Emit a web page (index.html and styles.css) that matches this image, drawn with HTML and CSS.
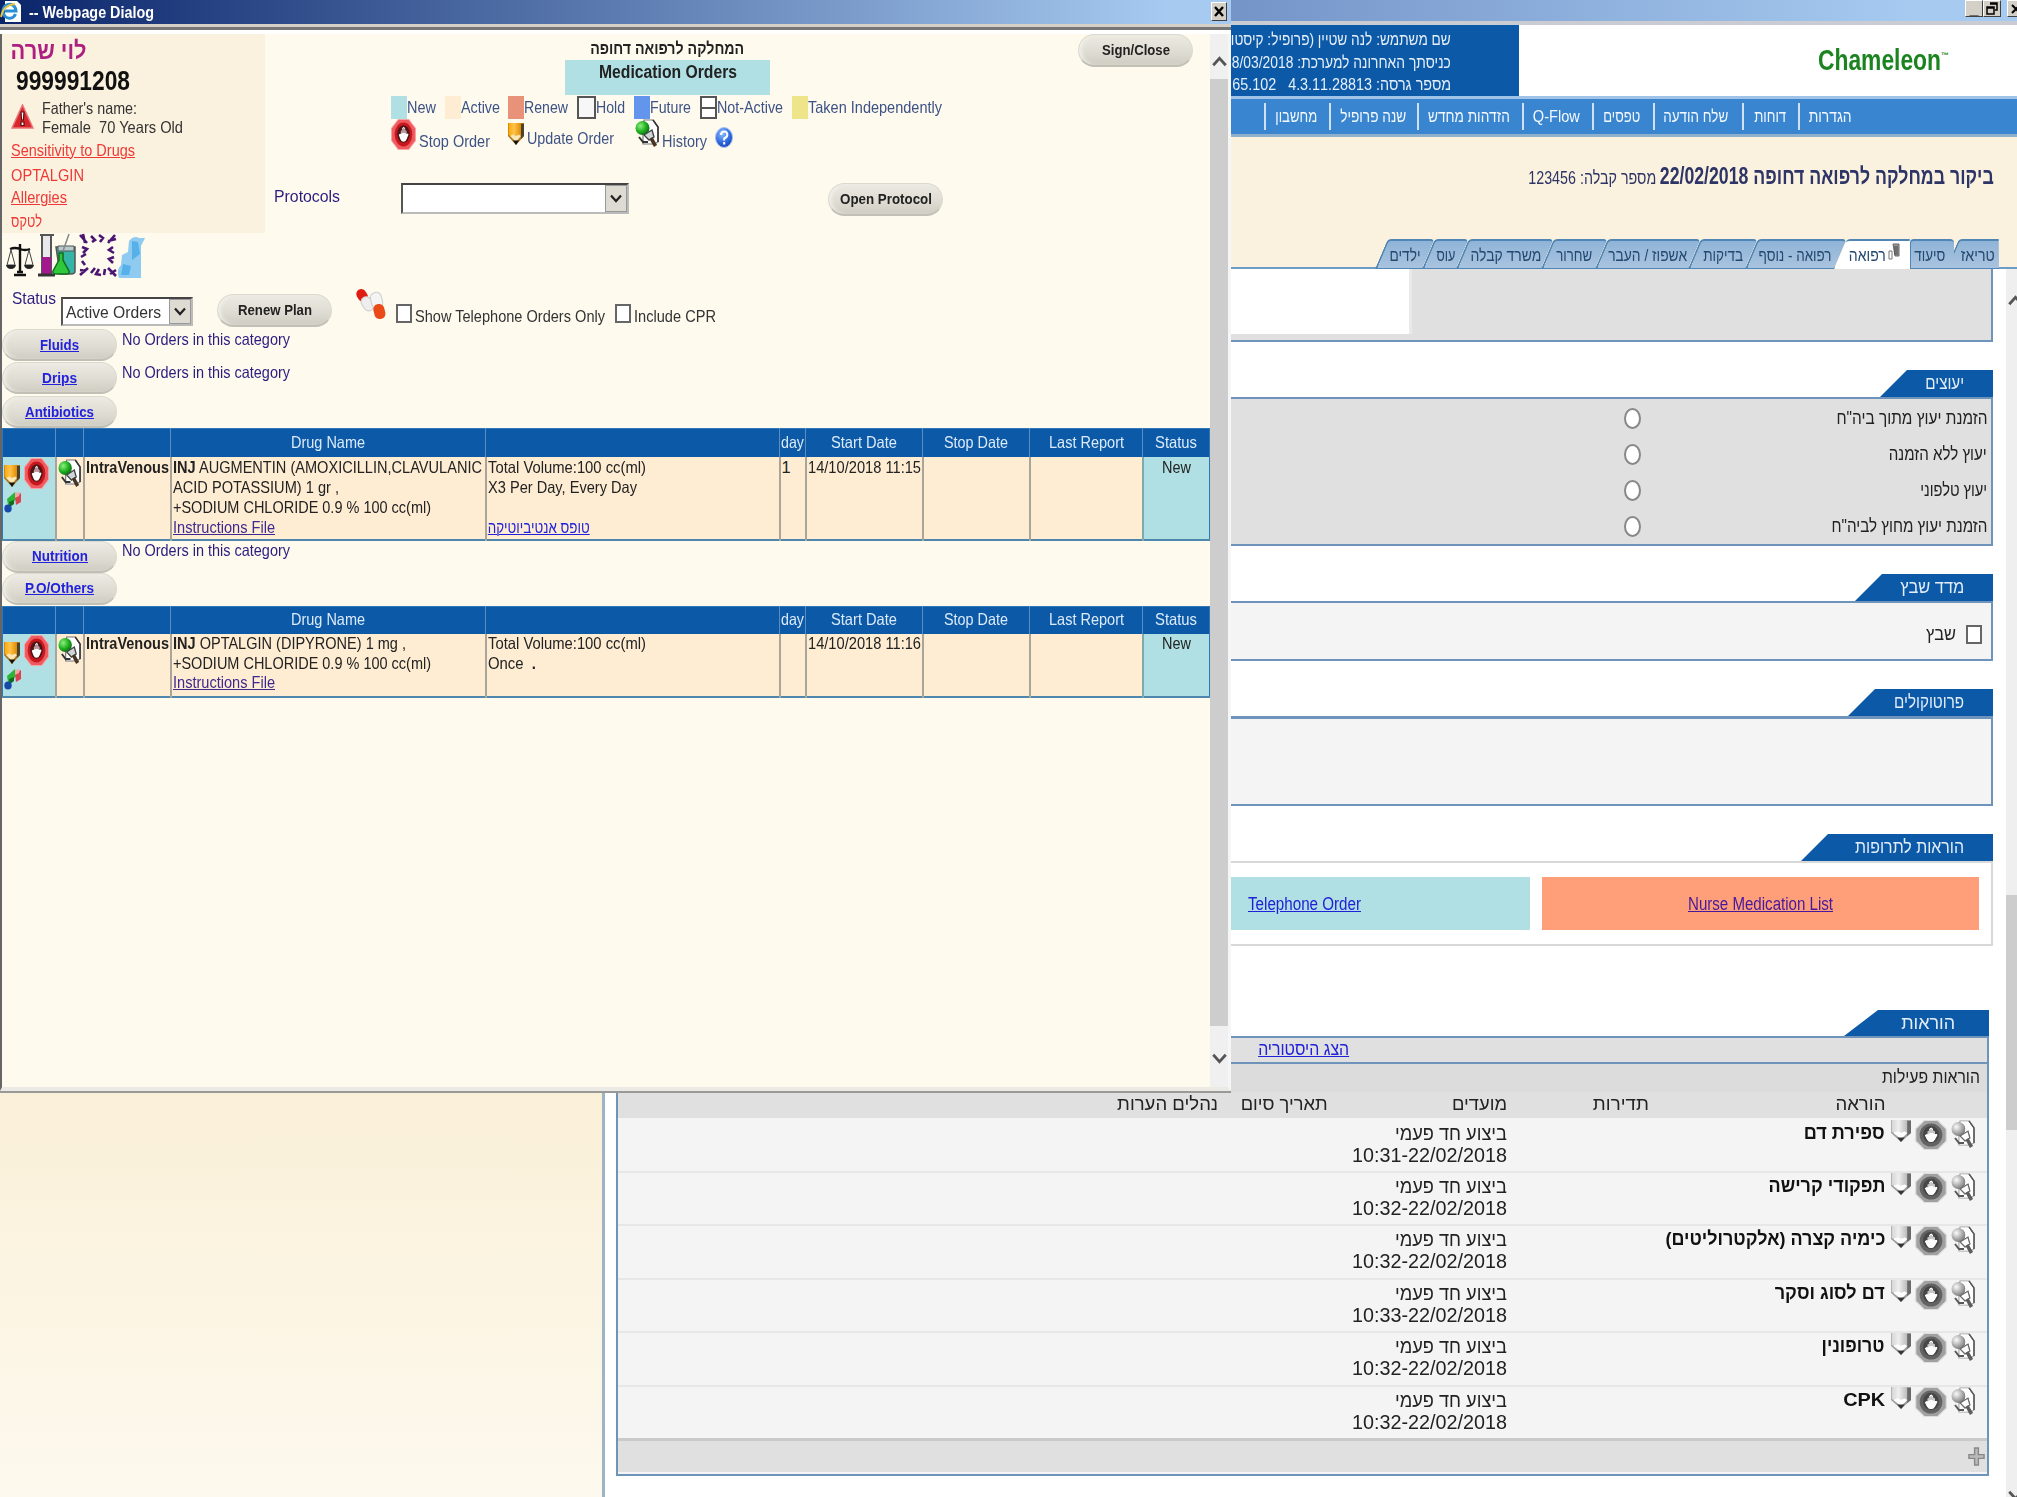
FILE: index.html
```html
<!DOCTYPE html>
<html lang="he">
<head>
<meta charset="utf-8">
<title>Chameleon</title>
<link rel="stylesheet" href="styles.css">
</head>
<body>
<svg class="defs" width="0" height="0">
  <defs>
    <linearGradient id="gold" x1="0" x2="1"><stop offset="0" stop-color="#f9a80c"/><stop offset=".45" stop-color="#ffc24a"/><stop offset="1" stop-color="#e08a00"/></linearGradient>
    <radialGradient id="ball" cx=".35" cy=".35" r=".7"><stop offset="0" stop-color="#8df07e"/><stop offset=".6" stop-color="#1fae1f"/><stop offset="1" stop-color="#0a6d12"/></radialGradient>
    <radialGradient id="blueball" cx=".4" cy=".3" r=".8"><stop offset="0" stop-color="#8fc0ff"/><stop offset=".6" stop-color="#2c66e0"/><stop offset="1" stop-color="#1b3fa8"/></radialGradient>
  </defs>
  <symbol id="stop" viewBox="0 0 24 30" preserveAspectRatio="none">
    <path d="M7 .5h10l6.500 8.500v12l-6.500 8.500H7L.5 21V9z" fill="#ee5a5f" stroke="#f6a3a3"/>
    <ellipse cx="12" cy="15" rx="8.500" ry="11.500" fill="#c9161d"/>
    <ellipse cx="12" cy="14.500" rx="6" ry="8.500" fill="#4d1517"/>
    <path d="M7.500 15.500q1-2 2-1v-3l1.200-.7V9l1.500-1.500L13.500 9v1.500l1.300 1v3q1.500-1 2 .5l-1.800 4.500q-1 2.500-3 2.500t-3-2.500z" fill="#fff"/>
    <path d="M9.700 14v-3l2.500-2.500L14.600 11v3l-2.400-.8z" fill="#8b5558" opacity=".6"/>
  </symbol>
  <symbol id="pencil" viewBox="0 0 16 22" preserveAspectRatio="none">
    <path d="M0 0h16v13l-8 9-8-9z" fill="#a8731a"/>
    <path d="M.5 0h12.500V12L8 16l-7.500-4z" fill="url(#gold)"/>
    <path d="M13 1h3v12l-3 3z" fill="#4b4332"/>
    <path d="M2 13l3-1.500 3 1.500 3-1.500 2 1.500-5 6z" fill="#fbe6b5"/><path d="M5 17.500L8 22l3-4.500z" fill="#111"/>
  </symbol>
  <symbol id="history" viewBox="0 0 24 28" preserveAspectRatio="none">
    <path d="M9 1h9l5 7v15l-4 2H8V10z" fill="#fff" stroke="#777" stroke-width="1.200"/>
    <path d="M18 1l5 7v15" fill="none" stroke="#333" stroke-width="1.600"/>
    <circle cx="7.500" cy="9" r="7" fill="url(#ball)"/>
    <path d="M9 16l8-5 2 7-5 3z" fill="#cfd6d8" stroke="#444" stroke-width="1.400"/>
    <path d="M16 19l4.500 8" stroke="#4a3524" stroke-width="3.600"/><path d="M4 18l4 5h5" fill="none" stroke="#333" stroke-width="2"/>
  </symbol>
  <symbol id="flow" viewBox="0 0 18 22" preserveAspectRatio="none">
    <path d="M4 18l3-8 6-4" fill="none" stroke="#333" stroke-width="2"/>
    <path d="M3 8l8-7 1 7-4 5-4 1z" fill="#29b637"/><path d="M11 6l6-4v9l-5 3z" fill="#d9434d"/><path d="M11 2l5-1-1 4-4 2z" fill="#f2a6a8"/><path d="M5 11l5-2v4l-4 3z" fill="#14691f"/>
    <ellipse cx="4" cy="17.500" rx="3.700" ry="4" fill="#1749a8"/>
  </symbol>
  <symbol id="chev-d" viewBox="0 0 12 8"><path d="M1 1l5 5.500L11 1" fill="none" stroke="currentColor" stroke-width="2.200"/></symbol>
</svg>

<div class="app" dir="rtl">
  <div class="app-title" dir="ltr">
    <i class="winbtn">_</i><i class="winbtn"><svg width="12" height="13" viewBox="0 0 12 13"><path d="M4 1h7v7H9M1 5h7v7H1zM1 6h7M4 2h7" fill="none" stroke="#000" stroke-width="1.500"/></svg></i><i class="winbtn last"><svg width="10" height="10" viewBox="0 0 10 10"><path d="M1 1l8 8M9 1L1 9" stroke="#000" stroke-width="2"/></svg></i>
  </div>
  <header class="brand">
    <div class="logo" dir="ltr"><span data-w="123">Chameleon</span><sup>™</sup></div>
    <div class="user">
      <div><span data-w="220">שם משתמש: לנה שטיין (פרופיל: קיסטו</span></div>
      <div><span data-w="219">כניסתך האחרונה למערכת: 8/03/2018</span></div>
      <div><span data-w="219">מספר גרסה: 4.3.11.28813 &nbsp; 65.102</span></div>
    </div>
  </header>
  <nav class="menu">
    <a class="m1"><span data-w="43">הגדרות</span></a>
    <a class="m2"><span data-w="32">דוחות</span></a>
    <a class="m3"><span data-w="65">שלח הודעה</span></a>
    <a class="m4"><span data-w="37">טפסים</span></a>
    <a class="m5"><span data-w="47">Q-Flow</span></a>
    <a class="m6"><span data-w="82">הזדהות מחדש</span></a>
    <a class="m7"><span data-w="66">שנה פרופיל</span></a>
    <a class="m8"><span data-w="42">מחשבון</span></a>
  </nav>
  <div class="visit">
    <h1><b data-w="334">ביקור במחלקה לרפואה דחופה 22/02/2018</b><span data-w="128">מספר קבלה: 123456</span></h1>
    <div class="tabs">
      <a class="t1"><span data-w="34">טריאז</span></a>
      <a class="t2"><span data-w="31">סיעוד</span></a>
      <a class="t3 on"><svg width="12" height="18" viewBox="0 0 12 18"><path d="M5 1h6v12H7z" fill="#999" stroke="#666"/><path d="M1 8h3v8H1z" fill="#fff" stroke="#777"/><path d="M7 3v9M9 3v9" stroke="#444"/></svg><span data-w="37">רפואה</span></a>
      <a class="t4"><span data-w="73">רפואה - נוסף</span></a>
      <a class="t5"><span data-w="40">בדיקות</span></a>
      <a class="t6"><span data-w="79">אשפוז / העבר</span></a>
      <a class="t7"><span data-w="36">שחרור</span></a>
      <a class="t8"><span data-w="71">משרד קבלה</span></a>
      <a class="t9"><span data-w="19">עוס</span></a>
      <a class="t10"><span data-w="31">ילדים</span></a>
    </div>
  </div>
  <div class="work">
    <div class="scroll"><svg class="up" width="15" height="11"><use href="#chev-d"/></svg><i></i><svg class="down" width="15" height="11"><use href="#chev-d"/></svg></div>
    <main>
      <section class="box first"><div class="whitebox"></div></section>

      <section class="consult">
        <h2 class="w112"><span data-w="39">יעוצים</span></h2>
        <div class="box grey">
          <label><span data-w="151">הזמנת יעוץ מתוך ביה"ח</span><i></i></label>
          <label><span data-w="98">יעוץ ללא הזמנה</span><i></i></label>
          <label><span data-w="67">יעוץ טלפוני</span><i></i></label>
          <label><span data-w="156">הזמנת יעוץ מחוץ לביה"ח</span><i></i></label>
        </div>
      </section>

      <section class="stroke">
        <h2 class="w137"><span data-w="64">מדד שבץ</span></h2>
        <div class="box"><i class="check"></i><span data-w="30">שבץ</span></div>
      </section>

      <section class="protocols">
        <h2 class="w144"><span data-w="70">פרוטוקולים</span></h2>
        <div class="box"></div>
      </section>

      <section class="meds">
        <h2 class="w191"><span data-w="109">הוראות לתרופות</span></h2>
        <div class="box" dir="ltr"><a class="tel"><span data-w="113">Telephone Order</span></a><a class="nurse"><span data-w="145">Nurse Medication List</span></a></div>
      </section>

      <section class="orders">
        <h2 class="w144"><span data-w="54">הוראות</span></h2>
        <div class="box">
          <div class="hist"><u data-w="91">הצג היסטוריה</u></div>
          <div class="active"><span data-w="98">הוראות פעילות</span></div>
          <div class="row head"><b></b><span><span data-w="50">הוראה</span></span><span><span data-w="56">תדירות</span></span><span><span data-w="55">מועדים</span></span><span><span data-w="87">תאריך סיום</span></span><span><span data-w="101">נהלים הערות</span></span></div>
          <div class="row"><b class="ic"><svg class="h"><use href="#history"/></svg><svg class="s"><use href="#stop"/></svg><svg class="p"><use href="#pencil"/></svg></b><strong><span data-w="81">ספירת דם</span></strong><span></span><div><span data-w="112">ביצוע חד פעמי</span><br><span dir="ltr" data-w="155">10:31-22/02/2018</span></div></div>
          <div class="row"><b class="ic"><svg class="h"><use href="#history"/></svg><svg class="s"><use href="#stop"/></svg><svg class="p"><use href="#pencil"/></svg></b><strong><span data-w="117">תפקודי קרישה</span></strong><span></span><div><span data-w="112">ביצוע חד פעמי</span><br><span dir="ltr" data-w="155">10:32-22/02/2018</span></div></div>
          <div class="row"><b class="ic"><svg class="h"><use href="#history"/></svg><svg class="s"><use href="#stop"/></svg><svg class="p"><use href="#pencil"/></svg></b><strong><span data-w="220">כימיה קצרה (אלקטרוליטים)</span></strong><span></span><div><span data-w="112">ביצוע חד פעמי</span><br><span dir="ltr" data-w="155">10:32-22/02/2018</span></div></div>
          <div class="row"><b class="ic"><svg class="h"><use href="#history"/></svg><svg class="s"><use href="#stop"/></svg><svg class="p"><use href="#pencil"/></svg></b><strong><span data-w="110">דם לסוג וסקר</span></strong><span></span><div><span data-w="112">ביצוע חד פעמי</span><br><span dir="ltr" data-w="155">10:33-22/02/2018</span></div></div>
          <div class="row"><b class="ic"><svg class="h"><use href="#history"/></svg><svg class="s"><use href="#stop"/></svg><svg class="p"><use href="#pencil"/></svg></b><strong><span data-w="63">טרופונין</span></strong><span></span><div><span data-w="112">ביצוע חד פעמי</span><br><span dir="ltr" data-w="155">10:32-22/02/2018</span></div></div>
          <div class="row"><b class="ic"><svg class="h"><use href="#history"/></svg><svg class="s"><use href="#stop"/></svg><svg class="p"><use href="#pencil"/></svg></b><strong><span data-w="42">CPK</span></strong><span></span><div><span data-w="112">ביצוע חד פעמי</span><br><span dir="ltr" data-w="155">10:32-22/02/2018</span></div></div>
          <div class="foot"><svg width="17" height="19" viewBox="0 0 18 20"><path d="M7 1h4v7h6v4h-6v7H7v-7H1V8h6z" fill="#bbb" stroke="#888" stroke-width="1.500"/></svg></div>
        </div>
      </section>
    </main>
    <aside></aside>
  </div>
</div>

<div class="dialog">
  <div class="dlg-title">
    <svg width="22" height="24" viewBox="0 0 22 24"><path d="M5 1h12l4 4v17H5z" fill="#fff"/><path d="M15.500 14a6.500 7 0 1 1 .5-3H5" fill="none" stroke="#2c8fd6" stroke-width="3"/><path d="M1 17Q3 5 15 4" fill="none" stroke="#e9c63e" stroke-width="1.800"/></svg>
    <span data-w="125">-- Webpage Dialog</span>
    <i class="winbtn"><svg width="10" height="11" viewBox="0 0 10 11"><path d="M1 1l8 9M9 1L1 10" stroke="#000" stroke-width="2.400"/></svg></i>
  </div>
  <div class="dlg-main">
    <div class="dlg-body">
      <div class="top">
        <div class="patient">
          <div class="pname"><span dir="rtl" data-w="76">לוי שרה</span></div>
          <div class="pid"><span data-w="114">999991208</span></div>
          <div class="pinfo">
            <svg width="23" height="26" viewBox="0 0 23 26"><path d="M11.500 1L22 24H1z" fill="#d8262c" stroke="#e8777a" stroke-width="1.500"/><path d="M10 8h3l-.6 8h-1.800zM10 18h3v3.500h-3z" fill="#fff" stroke="#5c0d10" stroke-width="1.200"/></svg>
            <div><div><span data-w="95">Father's name:</span></div><div><span data-w="141">Female &nbsp;70 Years Old</span></div></div>
          </div>
          <div class="al l1"><u data-w="124">Sensitivity to Drugs</u></div>
          <div class="al l2"><span data-w="73">OPTALGIN</span></div>
          <div class="al l3"><u data-w="56">Allergies</u></div>
          <div class="al l4"><span dir="rtl" data-w="31">לטקס</span></div>
        </div>
        <div class="tools">
          <div class="heading">
            <div class="unit"><div><span dir="rtl" data-w="154">המחלקה לרפואה דחופה</span></div><div class="mo"><span data-w="138">Medication Orders</span></div></div>
            <button class="pill"><span data-w="68">Sign/Close</span></button>
          </div>
          <div class="legend">
            <div><i class="new"></i><span data-w="29">New</span></div>
            <div><i class="act"></i><span data-w="39">Active</span></div>
            <div><i class="ren"></i><span data-w="44">Renew</span></div>
            <div><i class="hold"></i><span data-w="29">Hold</span></div>
            <div><i class="fut"></i><span data-w="41">Future</span></div>
            <div><i class="hold not"></i><span data-w="66">Not-Active</span></div>
            <div><i class="tak"></i><span data-w="134">Taken Independently</span></div>
          </div>
          <div class="legend two">
            <div><svg width="25" height="31"><use href="#stop"/></svg><span data-w="71">Stop Order</span></div>
            <div class="upd"><svg width="16" height="22"><use href="#pencil"/></svg><span data-w="87">Update Order</span></div>
            <div><svg width="24" height="28"><use href="#history"/></svg><span data-w="45">History</span></div>
            <div class="hlp"><svg width="18" height="21" viewBox="0 0 18 21"><ellipse cx="9" cy="10.500" rx="8.500" ry="10" fill="url(#blueball)" stroke="#a9c4ee"/><path d="M6 8q0-3.500 3.200-3.500T12.300 8q0 2-3.100 3.500v2M9.200 15v2.400" fill="none" stroke="#fff" stroke-width="2"/></svg></div>
          </div>
          <div class="proto"><span data-w="66">Protocols</span><div class="select"><span></span><b><svg width="12" height="9"><use href="#chev-d"/></svg></b></div><button class="pill"><span data-w="92">Open Protocol</span></button></div>
        </div>
      </div>
      <div class="picts">
        <svg width="28" height="36" viewBox="0 0 28 36"><path d="M14 2v29M4 7q5-2 10 0t10 0M8 33h12M11 30h6" fill="none" stroke="#111" stroke-width="2.400"/><path d="M5 8L1 23h8zM23 8l-4 15h8z" fill="none" stroke="#444"/><path d="M0 23h10q-1 4-5 4t-5-4M18 23h10q-1 4-5 4t-5-4" fill="#222"/></svg>
        <svg width="38" height="44" viewBox="0 0 38 44"><path d="M2 2h14M4 3v38h9V3" fill="#e8e8ea" stroke="#555" stroke-width="2"/><path d="M4 24h9v17H4z" fill="#a3178f"/><path d="M0 42h17" stroke="#333" stroke-width="3"/><path d="M18 14h19v24q0 3-4 3H22z" fill="#35b5a8" stroke="#555" stroke-width="1.500"/><path d="M20 13h16v5H20z" fill="#b5cccc" stroke="#555"/><path d="M31 1l-6 17" stroke="#888" stroke-width="1.500"/><path d="M21 20h4v7l6 11q1 3-3 3H18q-4 0-3-3l6-11z" fill="#2fc83a" stroke="#136b20" stroke-width="1.500"/></svg>
        <svg width="38" height="44" viewBox="0 0 38 44"><g fill="none" stroke="#4a1672" stroke-width="2.600"><path d="M1 2l7 8M4 1l2 9M12 3l4 4-3 2M20 2l4 3-3 4M36 2l-7 8M37 6l-8 2M3 14l5 2-4 4M2 24l5-3M3 28l3 4M34 14l-4 3 5 3M35 24l-5 2 4 4M1 42l8-7M1 37l6 1M12 40l4-5M20 36l-3 5 5 1M26 36l-1 6M37 43l-8-8M31 41l6-4"/></g></svg>
        <svg width="27" height="42" viewBox="0 0 27 42"><path d="M11 5q5-6 10-3l6 0-4 8v32H1q-3-8 2-13l1-10 6-3z" fill="#8fcbf0"/><path d="M14 5l6 1 2 12-8 6zM5 28l8 2-2 9H3z" fill="#56b0ea"/></svg>
      </div>
      <div class="status">
        <span class="lbl" data-w="44">Status</span>
        <div class="select"><span data-w="95">Active Orders</span><b><svg width="12" height="9"><use href="#chev-d"/></svg></b></div>
        <button class="pill"><span data-w="74">Renew Plan</span></button>
        <svg class="pills" width="31" height="33" viewBox="0 0 31 33"><g transform="rotate(-32 9 12)"><rect x="4" y="0" width="10" height="13" rx="5" fill="#e01b12"/><rect x="4" y="9" width="10" height="15" rx="5" fill="#eee" stroke="#ccc"/></g><g transform="rotate(-14 23 20)"><rect x="17" y="4" width="11" height="16" rx="5" fill="#f4f4f4" stroke="#ccc"/><rect x="17" y="16" width="11" height="15" rx="5" fill="#ea4a17"/></g></svg>
        <i class="check"></i><span class="ck" data-w="190">Show Telephone Orders Only</span>
        <i class="check second"></i><span class="ck" data-w="82">Include CPR</span>
      </div>
      <div class="cat"><a class="pill"><span data-w="39">Fluids</span></a><span data-w="168">No Orders in this category</span></div>
      <div class="cat"><a class="pill"><span data-w="35">Drips</span></a><span data-w="168">No Orders in this category</span></div>
      <div class="cat anti"><a class="pill"><span data-w="69">Antibiotics</span></a></div>
      <table>
        <colgroup><col class="c1"><col class="c2"><col class="c3"><col class="c4"><col class="c5"><col class="c6"><col class="c7"><col class="c8"><col class="c9"><col class="c10"></colgroup>
        <tr><th></th><th></th><th></th><th><span data-w="74">Drug Name</span></th><th></th><th><span data-w="23">day</span></th><th><span data-w="66">Start Date</span></th><th><span data-w="64">Stop Date</span></th><th><span data-w="75">Last Report</span></th><th><span data-w="42">Status</span></th></tr>
        <tr class="r1"><td class="teal"><div class="acts"><svg width="16" height="22"><use href="#pencil"/></svg><svg width="25" height="31"><use href="#stop"/></svg><svg width="18" height="22"><use href="#flow"/></svg></div></td><td><svg width="23" height="28"><use href="#history"/></svg></td><td><b data-w="83">IntraVenous</b></td>
          <td><span data-w="309"><b>INJ</b> AUGMENTIN (AMOXICILLIN,CLAVULANIC</span><br><span data-w="166">ACID POTASSIUM) 1 gr ,</span><br><span data-w="258">+SODIUM CHLORIDE 0.9 % 100 cc(ml)</span><br><u class="visited" data-w="102">Instructions File</u></td>
          <td><span data-w="158">Total Volume:100 cc(ml)</span><br><span data-w="149">X3 Per Day, Every Day</span><br><br><u dir="rtl" data-w="102">טופס אנטיביוטיקה</u></td><td>1</td><td><span data-w="113">14/10/2018 11:15</span></td><td></td><td></td><td class="teal new"><span data-w="29">New</span></td></tr>
      </table>
      <div class="cat nut"><a class="pill"><span data-w="56">Nutrition</span></a><span data-w="168">No Orders in this category</span></div>
      <div class="cat po"><a class="pill"><span data-w="69">P.O/Others</span></a></div>
      <table>
        <colgroup><col class="c1"><col class="c2"><col class="c3"><col class="c4"><col class="c5"><col class="c6"><col class="c7"><col class="c8"><col class="c9"><col class="c10"></colgroup>
        <tr><th></th><th></th><th></th><th><span data-w="74">Drug Name</span></th><th></th><th><span data-w="23">day</span></th><th><span data-w="66">Start Date</span></th><th><span data-w="64">Stop Date</span></th><th><span data-w="75">Last Report</span></th><th><span data-w="42">Status</span></th></tr>
        <tr class="r2"><td class="teal"><div class="acts"><svg width="16" height="22"><use href="#pencil"/></svg><svg width="25" height="31"><use href="#stop"/></svg><svg width="18" height="22"><use href="#flow"/></svg></div></td><td><svg width="23" height="28"><use href="#history"/></svg></td><td><b data-w="83">IntraVenous</b></td>
          <td><span data-w="233"><b>INJ</b> OPTALGIN (DIPYRONE) 1 mg ,</span><br><span data-w="258">+SODIUM CHLORIDE 0.9 % 100 cc(ml)</span><br><u class="visited" data-w="102">Instructions File</u></td>
          <td><span data-w="158">Total Volume:100 cc(ml)</span><br><span data-w="48">Once &nbsp;<b>.</b></span></td><td></td><td><span data-w="113">14/10/2018 11:16</span></td><td></td><td></td><td class="teal new"><span data-w="29">New</span></td></tr>
      </table>
    </div>
    <div class="dlg-scroll"><svg class="up" width="15" height="11"><use href="#chev-d"/></svg><i></i><svg width="15" height="11"><use href="#chev-d"/></svg></div>
  </div>
</div>
<script src="fit.js"></script>
</body>
</html>
```

FILE: fit.js
```js
// Condense each label horizontally to the width given in data-w.
document.querySelectorAll('[data-w]').forEach(function (el) {
  var target = Number(el.dataset.w);
  var natural = el.getBoundingClientRect().width;
  el.style.transform = 'scaleX(' + target / natural + ')';
  el.style.marginInlineEnd = (target - natural) + 'px';
});
```

FILE: styles.css
```css
* { box-sizing: border-box; }
body { margin: 0; width: 2017px; height: 1497px; overflow: hidden; position: relative; background: #fff; font: 16.5px/20px "Liberation Sans", Arial, sans-serif; color: #222; }
.defs { position: absolute; }
svg { display: block; flex: none; }
i { font-style: normal; flex: none; }
[data-w] { display: inline-block; white-space: nowrap; flex: none; transform-origin: 0 50%; text-decoration-thickness: 1px; }
[dir="rtl"] [data-w], [data-w][dir="rtl"] { transform-origin: 100% 50%; }
[dir="rtl"] [dir="ltr"] [data-w], [data-w][dir="ltr"] { transform-origin: 0 50%; }

/* ---------- application window ---------- */
.app { height: 1497px; display: flex; flex-direction: column; }
.app-title { height: 25px; flex: none; display: flex; justify-content: flex-end; background: linear-gradient(90deg, #0a246a, #7494c8 61%, #a6caf0 95%); border-bottom: 4px solid #c9ccd2; }
.winbtn { width: 18px; height: 17px; display: flex; align-items: center; justify-content: center; background: #d4d0c8; border: 1px solid; border-color: #fff #404040 #404040 #fff; font: bold 16px/10px "Liberation Sans", sans-serif; }
.app-title .last { margin: 0 -8px 0 6px; }
.brand { height: 71px; flex: none; display: flex; justify-content: space-between; }
.logo { width: 498px; padding: 18px 0 0 299px; display: flex; color: #1b8420; font: bold 29px/34px "Liberation Sans", sans-serif; white-space: nowrap; }
.logo sup { font-size: 8px; line-height: 26px; }
.user { width: 1519px; padding: 4px 68px 0 0; background: #0b59a7; color: #e4effa; font-size: 17px; line-height: 22.500px; }
.menu { height: 41px; flex: none; display: flex; align-items: center; padding-right: 155px; background: #3985d0; border: solid; border-width: 3px 0; border-color: #9fc3e6 transparent #8fb0cc; color: #f4f9ff; font-size: 17px; line-height: 27px; }
.menu a { height: 27px; border-left: 2px solid #cfe1f3; }
.m1 { width: 64px; padding-right: 10px; }
.m2 { width: 56px; padding-right: 12px; }
.m3 { width: 89px; padding-right: 14px; }
.m4 { width: 61px; padding-right: 13px; }
.m5 { width: 70px; padding-right: 12px; }
.m6 { width: 105px; padding-right: 12px; }
.m7 { width: 88px; padding-right: 11px; }
.m8 { width: 65px; padding-right: 12px; }
.visit { height: 132px; flex: none; display: flex; flex-direction: column; justify-content: space-between; background: #faf1de; border-bottom: 2px solid #6d9cc4; }
h1 { margin: 25px 23px 0 0; display: flex; align-items: baseline; gap: 4px; font-weight: normal; color: #2d3566; font-size: 18px; line-height: 28px; }
h1 b { font-size: 23px; }
.tabs { height: 30px; display: flex; padding-right: 18px; margin-bottom: -2px; font-size: 17px; color: #24496f; }
.tabs a { position: relative; z-index: 0; height: 30px; padding: 7px 4px 0 0; display: flex; }
.tabs a::before { content: ""; position: absolute; z-index: -1; inset: 0; transform: skewX(-23deg); transform-origin: 0 100%; background: linear-gradient(#8fb4d8, #a9c3df); border: solid #4f86b5; border-width: 2px 0 1px 2px; border-radius: 4px 4px 0 0; }
.tabs .t1 { width: 53px; }
.tabs .t2 { width: 36px; padding-right: 1px; }
.tabs .t3 { width: 76px; padding: 4px 10px 0 0; gap: 2px; }
.tabs .t4 { width: 89px; padding-right: 2px; }
.tabs .t5 { width: 57px; padding-right: 2px; }
.tabs .t6 { width: 93px; padding-right: 1px; }
.tabs .t7 { width: 54px; padding-right: 3px; }
.tabs .t8 { width: 85px; padding-right: 0; }
.tabs .t9 { width: 34px; padding-right: 1px; }
.tabs .t10 { width: 47px; padding-right: 2px; }
.tabs .t1::before { clip-path: polygon(0 0, calc(100% - 13px) 0, 100% 100%, 0 100%); }
.tabs .t2::before { transform: none; border-left-width: 1px; right: -8px; }
.tabs .t3::before { background: #fff; border-bottom-color: #fff; border-left: 0; clip-path: polygon(0 0, calc(100% - 13px) 0, 100% 100%, 0 100%); }
.tabs .t3 span { margin-top: 3px; }

.work { flex: 1; min-height: 0; display: flex; background: #fff; }
.scroll { width: 11px; background: #efefef; display: flex; flex-direction: column; color: #555; }
.scroll .up { margin: 26px -6px 0 0; transform: rotate(180deg); }
.scroll i { width: 11px; height: 235px; margin-top: 589px; background: #cdcdcd; }
.scroll .down { margin: 360px -6px 0 0; }
main { flex: 1; padding: 0 13px 0 11px; }
aside { width: 605px; border-right: 3px solid #9cb4c6; background: linear-gradient(#faf0d8 825px, #fdf9ee); }
.box { border: 2px solid #6e94bb; background: #f4f4f4; }
.first { height: 73px; border-top: 0; background: #e0e0e0; }
.whitebox { width: 794px; height: 65px; margin-right: auto; background: #fff; border-right: 3px solid #eaeaea; }
h2 { margin: 0; height: 27px; padding-right: 29px; background: #0b59a7; color: #e2edf8; font-size: 18px; font-weight: normal; line-height: 27px; clip-path: polygon(27px 0, 100% 0, 100% 100%, 0 100%); }
.w112 { width: 113px; } .w137 { width: 138px; } .w144 { width: 145px; } .w191 { width: 192px; }
.consult { margin-top: 28px; }
.consult .box { height: 149px; padding-top: 1px; background: #e0e0e0; }
.consult label { display: flex; align-items: center; height: 36px; padding-right: 4px; font-size: 18px; width: 367px; justify-content: space-between; }
.consult label i { width: 17px; height: 21px; border: 2px solid #888; border-radius: 50%; background: #fff; }
.stroke { margin-top: 28px; }
.stroke .box { height: 60px; padding: 6px 9px 0 0; display: flex; align-items: center; gap: 10px; font-size: 18px; }
.check { width: 16px; height: 19px; border: 2px solid #666; background: #fff; }
.protocols { margin-top: 28px; }
.protocols .box { height: 90px; border-top-width: 3px; }
.meds { margin-top: 28px; }
.meds .box { height: 85px; border-color: #d8d8d8; background: #fff; padding: 14px 12px 14px 0; display: flex; justify-content: flex-end; gap: 12px; }
.meds a { height: 53px; display: flex; align-items: center; text-decoration: underline; color: #2020d8; font-size: 18px; }
.tel { width: 450px; background: #b0e0e3; padding-left: 168px; }
.meds .nurse { width: 437px; background: #ff9f7a; justify-content: center; color: #46189c; }
.orders { margin: 64px 4px 0 0; }
.orders h2 { height: 26px; clip-path: polygon(34px 0, 100% 0, 100% 100%, 0 100%); padding-right: 34px; }
.orders .box { background: #f4f4f4; height: 440px; font-size: 19.500px; }
.hist { height: 26px; border-bottom: 2px solid #6e94bb; background: #e0e0e0; padding-right: 638px; font-size: 18px; line-height: 22px; color: #2020d8; }
.active { height: 28px; background: #dcdcdc; padding-right: 7px; font-size: 18px; line-height: 27px; }
.row { height: 53.500px; display: grid; grid-template-columns: 102px 236px 142px 179px 110px 1fr; border-top: 2px solid #e7e7e7; line-height: 22px; }
.row div { padding-top: 2px; }
.head { height: 26px; background: #e0e0e0; border: 0; line-height: 24px; font-size: 18px; }
.head + .row { height: 52.500px; border-top-color: #f4f4f4; }
.row strong { font-size: 19px; padding-top: 3px; line-height: 20px; color: #111; }
.ic { display: flex; padding: 0 12px 0 0; filter: grayscale(1) brightness(1.2); opacity: .85; }
.ic .h { width: 24px; height: 28px; } .ic .s { width: 32px; height: 30px; margin: 0 4px 0 4px; } .ic .p { width: 20px; height: 22px; }
.foot { height: 34px; border-top: 3px solid #cacaca; background: #e0e0e0; padding: 6px 2px; }

/* ---------- dialog ---------- */
.dialog { position: absolute; left: 0; top: 0; width: 1231px; height: 1093px; display: flex; flex-direction: column; background: #fefaee; border-bottom: 2px solid #999; overflow: hidden; }
.dlg-title { height: 34px; flex: none; display: flex; align-items: flex-start; padding: 0 4px 0 0; color: #fff; font-weight: bold; font-size: 16px; line-height: 26px; background: linear-gradient(90deg, #0a246a, #a6caf0 95%) 0 0/100% 24px no-repeat, linear-gradient(#d4d0c8 27px, #777 27px 30px, #fff 30px); }
.dlg-title > span { margin-left: 7px; }
.dlg-title .winbtn { margin: 2px 0 0 auto; width: 16px; height: 19px; }
.dlg-main { flex: 1; display: flex; border-left: 2px solid #666; border-bottom: 4px solid #eceae4; border-right: 3px solid #f6f6f6; }
.dlg-body { width: 1208px; }
.dlg-scroll { width: 18px; background: #f0f0f0; display: flex; flex-direction: column; align-items: center; color: #555; }
.dlg-scroll .up { transform: rotate(180deg); margin: 22px 0 12px; }
.dlg-scroll i { width: 18px; height: 947px; background: #cdcdcd; margin-bottom: 27px; }
.top { display: flex; height: 199px; }
.patient { width: 263px; background: #faf1de; padding-left: 9px; }
.pname { height: 32px; font: bold 24px/33px "Liberation Sans", sans-serif; color: #ad1f81; }
.pid { height: 34px; padding-left: 5px; font: bold 27px/31px "Liberation Sans", sans-serif; color: #111; }
.pinfo { height: 39px; display: flex; line-height: 18.500px; gap: 8px; color: #333; }
.pinfo svg { margin-top: 4px; }
.pinfo > div { margin-top: -1px; }
.al { color: #ee3a36; } .l1 { height: 25px; line-height: 22px; } .l2 { height: 22px; line-height: 22px; } .l3 { height: 22px; line-height: 22px; } .l4 { line-height: 27px; }
.heading { display: grid; grid-template-columns: 205px 115px; column-gap: 308px; padding-left: 300px; height: 62px; }
.unit { text-align: center; font-weight: bold; line-height: 29px; }
.unit > div:first-child { height: 26px; }
.mo { height: 35px; background: #b0e0e3; line-height: 24px; font-size: 18px; }
.pill { width: 115px; height: 33px; padding: 0; border: 1px solid #dcd9cf; border-bottom: 2px solid #c2bfb6; border-radius: 17px; background: linear-gradient(#eceae2, #dedbd2 60%, #cfccc2); display: flex; align-items: center; justify-content: center; font: bold 15.500px/30px "Liberation Sans", sans-serif; color: #222; box-shadow: inset 4px 0 4px -2px #f4f3ee; }
.legend { display: grid; grid-template-columns: 54px 63px 69px 57px 66px 92px 151px; padding-left: 126px; height: 23px; color: #3d5285; line-height: 22px; }
.legend div { display: flex; }
.legend i { width: 16px; height: 23px; }
.new { background: #b0e0e3; } .act { background: #feedd3; } .ren { background: #e9927a; } .fut { background: #6495ed; } .tak { background: #eee58a; }
.legend .hold { width: 19px; border: 2px solid #555; background: #f7f7f7; }
.legend .not { background: linear-gradient(#fff 9px, #555 9px 11px, #fff 11px); width: 17px; }
.legend.two { grid-template-columns: 117px 127px 80px 40px; height: 64px; line-height: 45px; }
.legend.two div { gap: 3px; } .legend.two div span { height: 31px; }
.legend.two .upd { line-height: 39px; } .legend.two .upd svg { margin-top: 4px; } .legend.two .hlp svg { margin-top: 8px; }
.proto { display: flex; padding-left: 9px; color: #2a1d80; line-height: 26px; }
.proto .select { margin: 0 199px 0 61px; width: 228px; height: 31px; }
.select { display: flex; justify-content: space-between; background: #fff; border: 2px solid #555; border-color: #444 #bbb #bbb #555; color: #333; }
.select b { width: 22px; background: #dedbd3; border: 1px solid #999; color: #222; display: flex; align-items: center; justify-content: center; }
.picts { height: 51px; display: flex; padding-left: 4px; }
.picts svg:nth-child(1) { margin: 9px 4px 0 0; } .picts svg:nth-child(2) { margin-right: 3px; } .picts svg:nth-child(4) { margin: 3px 0 0 1px; }
.status { height: 45px; display: flex; padding-left: 10px; }
.status .lbl { color: #2a1d80; height: 26px; line-height: 28px; }
.status .select { margin: 13px 24px 0 5px; width: 132px; height: 29px; padding-left: 3px; line-height: 27px; }
.status .pill { margin-top: 10px; }
.status .pills { margin: 4px 9px 0 24px; }
.status .check { margin: 20px 3px 0 0; } .status .second { margin-left: 10px; }
.ck { margin-top: 22px; color: #333; }
.cat { height: 33px; display: flex; gap: 5px; color: #2a1d80; }
.cat > span { line-height: 20px; }
.cat .pill { height: 32px; color: #2222dd; text-decoration: underline; }
.anti { padding-top: 1px; }
.nut { height: 32px; } .nut > span { line-height: 18px; }
table { width: 1207px; table-layout: fixed; border-collapse: collapse; border: 1px solid #2f77b5; border-bottom: 2px solid #4f86ad; }
.c1 { width: 53px; } .c2 { width: 28px; } .c3 { width: 87px; } .c4 { width: 315px; } .c5 { width: 294px; } .c6 { width: 26px; } .c7 { width: 117px; } .c8 { width: 107px; } .c9 { width: 113px; } .c10 { width: 67px; }
th { height: 28px; padding: 0; background: #0b59a7; color: #dcebfa; font-weight: normal; border-left: 1px solid #5c8dbd; line-height: 22px; padding-bottom: 2px; }
td { padding: 0 0 0 1px; vertical-align: top; background: #feedd3; border-left: 2px solid #aaa59a; line-height: 20px; }
.r1 td { height: 83px; } .r2 td { height: 63px; line-height: 19.500px; }
td:first-child, th:first-child { border-left: 0; }
td.teal { background: #b0e0e3; border-left-color: #7fa9ac; }
td:first-child.teal { padding: 0; }
td.new { text-align: center; }
td u { color: #2222dd; } td u.visited { color: #3d2a90; }
td > svg { margin-top: 2px; }
.acts { display: flex; flex-wrap: wrap; width: 50px; padding-left: 1px; }
.acts svg:nth-child(1) { margin: 8px 4px 0 0; }
.acts svg:nth-child(2) { margin-top: 1px; }
.acts svg:nth-child(3) { margin-top: 2px; }
```
